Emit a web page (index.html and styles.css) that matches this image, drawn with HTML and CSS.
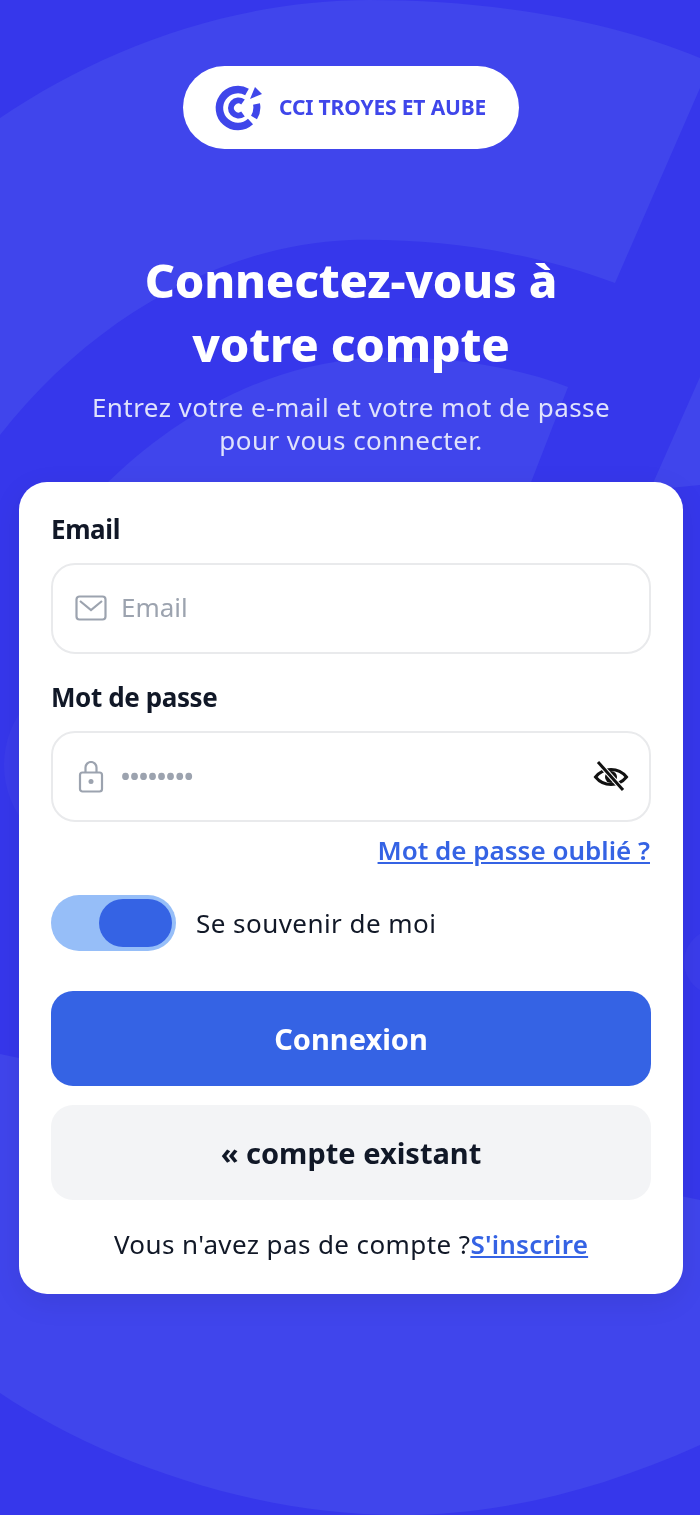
FILE: index.html
```html
<!doctype html>
<html lang="fr">
<head>
  <meta charset="UTF-8" />
  <title>Connexion - CCI Troyes et Aube</title>
  <meta name="viewport" content="width=device-width, initial-scale=1.0" />
  <link rel="stylesheet" href="styles.css">
</head>
<body>
  <!-- Background watermark -->
  <svg class="bg-shapes" viewBox="0 0 700 1515" aria-hidden="true">
    <path d="M0 118C100 50 230 0 370 0C490 0 610 20 700 58V88L615 283C540 255 450 238 350 240C220 245 90 320 0 435Z" />
    <path d="M100 490C170 420 260 365 370 358C440 355 510 365 568 387L528 490Z" />
    <path d="M650 490L700 377V485Z" />
    <path d="M0 1054L700 1200V1445C600 1490 500 1515 400 1515C250 1515 100 1460 0 1393Z" />
    <ellipse class="faint" cx="90" cy="765" rx="86" ry="90" />
    <ellipse class="faint" cx="720" cy="962" rx="36" ry="34" />
  </svg>

  <div id="app">
    <div class="logo">
      <svg class="logo-mark" viewBox="0 0 48 48" aria-hidden="true">
        <path class="ring" d="M33 7.9A18.5 18.5 0 1 0 36.5 37.6" />
        <path class="ring-small" d="M29 18A7.5 7.5 0 1 0 29 30" />
        <path class="ring-i" d="M42.5 20A18.5 18.5 0 0 1 40 33.5" />
        <path class="dot-i" d="M41 3L48 10L36 15Z" />
      </svg>
      <span class="logo-text">CCI TROYES ET AUBE</span>
    </div>

    <h1>Connectez-vous à<br>votre compte</h1>
    <p class="subtitle">Entrez votre e-mail et votre mot de passe<br>pour vous connecter.</p>

    <div class="card">
      <div class="field-label">Email</div>
      <div class="input-box">
        <svg class="input-icon" viewBox="0 0 32 32" aria-hidden="true">
          <rect x="1.5" y="3.5" width="29" height="23" rx="3" />
          <path d="M5 8L16 17L27 8" />
        </svg>
        <span class="placeholder">Email</span>
      </div>

      <div class="field-label second">Mot de passe</div>
      <div class="input-box">
        <svg class="input-icon" viewBox="0 0 32 32" aria-hidden="true">
          <rect x="5" y="11.5" width="22" height="19" rx="2.5" />
          <path d="M10.5 11.5V6.5a5.5 5.5 0 0 1 11 0V11.5" />
          <circle class="lock-dot" cx="16" cy="20.5" r="2.5" />
        </svg>
        <span class="dots">••••••••</span>
        <svg class="eye-icon" viewBox="0 0 36 36" aria-hidden="true">
          <path d="M2.5 18C7 12.5 12 10.5 18 10.5S29 12.5 33.5 18C29 23.5 24 25.5 18 25.5S7 23.5 2.5 18Z" />
          <circle class="pupil" cx="18" cy="18" r="6" />
          <path class="slash-gap" d="M5 3L30 31" />
          <path class="slash" d="M5 3L30 31" />
        </svg>
      </div>
      <div class="forgot"><a href="#">Mot de passe oublié ?</a></div>

      <div class="remember">
        <div class="toggle"><div class="toggle-thumb"></div></div>
        <span>Se souvenir de moi</span>
      </div>

      <button class="btn btn-primary">Connexion</button>
      <button class="btn btn-light">« compte existant</button>

      <p class="signup">Vous n'avez pas de compte ?<a href="#">S'inscrire</a></p>
    </div>
  </div>
</body>
</html>
```

FILE: styles.css
```css
body, html {
  margin: 0;
  padding: 0;
  height: 100%;
  overflow: hidden;
  background: #3637eb;
  font-family: 'Noto Sans', sans-serif;
}
/* Watermark behind everything */
.bg-shapes {
  position: fixed;
  top: 0;
  left: 0;
  width: 700px;
  height: 1515px;
  fill: #4045ec;
}
.bg-shapes .faint {
  fill: #3b3ceb;
}
#app {
  position: relative;
  display: flex;
  flex-direction: column;
  align-items: center;
  padding: 66px 0 0 2px;
}
/* Logo pill */
.logo {
  width: 336px;
  height: 83px;
  box-sizing: border-box;
  padding-left: 31px;
  background: white;
  border-radius: 42px;
  display: flex;
  align-items: center;
  gap: 17px;
}
.logo-mark {
  width: 48px;
  height: 48px;
  flex: none;
}
.logo-mark path {
  fill: none;
  stroke: #3f46ea;
}
.logo-mark .ring {
  stroke-width: 7.5;
}
.logo-mark .ring-small {
  stroke-width: 6;
}
.logo-mark .ring-i {
  stroke-width: 7;
}
.logo-mark .dot-i {
  fill: #3f46ea;
  stroke: none;
}
.logo-text {
  color: #3f46ea;
  font-size: 21px;
  font-weight: 700;
  letter-spacing: -0.15px;
  white-space: nowrap;
  padding-bottom: 2px;
}
h1 {
  margin: 99px 0 0;
  color: white;
  font-size: 47px;
  font-weight: 800;
  line-height: 64px;
  letter-spacing: -0.2px;
  text-align: center;
}
.subtitle {
  margin: 15px 0 0;
  color: #dfe2fc;
  font-size: 26px;
  line-height: 33px;
  text-align: center;
  letter-spacing: 0.44px;
}
/* Form card */
.card {
  width: 664px;
  height: 812px;
  box-sizing: border-box;
  margin-top: 25px;
  padding: 29px 32px;
  background: white;
  border-radius: 28px;
  box-shadow: 0 8px 30px rgba(0, 0, 0, 0.08);
}
.field-label {
  color: #111827;
  font-size: 26px;
  font-weight: 700;
  line-height: 36px;
  letter-spacing: -0.4px;
}
.field-label.second {
  margin-top: 25px;
}
.input-box {
  height: 91px;
  box-sizing: border-box;
  margin-top: 16px;
  padding: 0 20px 0 22px;
  border: 2px solid #e9eaec;
  border-radius: 24px;
  display: flex;
  align-items: center;
  gap: 14px;
}
.input-icon {
  width: 32px;
  height: 32px;
  flex: none;
  fill: none;
  stroke: #9ca3af;
  stroke-width: 2.2;
}
.input-icon .lock-dot {
  fill: #9ca3af;
  stroke: none;
}
.placeholder {
  color: #9ca3af;
  font-size: 26px;
  padding-bottom: 4px;
}
.dots {
  color: #9ca3af;
  font-size: 24px;
  font-weight: 700;
  padding-bottom: 2px;
}
.eye-icon {
  width: 36px;
  height: 36px;
  margin-left: auto;
  fill: none;
  stroke: #111;
  stroke-width: 3;
}
.eye-icon .pupil {
  fill: #111;
  stroke: none;
}
.eye-icon .slash-gap {
  stroke: white;
  stroke-width: 5;
}
.forgot {
  margin-top: 10px;
  padding-right: 1px;
  text-align: right;
}
a {
  color: #3563e4;
  font-weight: 600;
  text-decoration: underline;
}
.forgot a {
  font-size: 26px;
  line-height: 36px;
}
.remember {
  margin-top: 27px;
  display: flex;
  align-items: center;
  gap: 20px;
  color: #111827;
  font-size: 26px;
  letter-spacing: 0.45px;
}
.toggle {
  width: 125px;
  height: 56px;
  box-sizing: border-box;
  padding: 4px;
  background: #96bef8;
  border-radius: 28px;
  display: flex;
  justify-content: flex-end;
}
.toggle-thumb {
  width: 73px;
  height: 48px;
  background: #3563e4;
  border-radius: 24px;
}
.btn {
  display: block;
  width: 100%;
  height: 95px;
  padding: 0;
  border: none;
  border-radius: 22px;
  font-family: inherit;
  font-size: 29px;
  cursor: pointer;
}
.btn-primary {
  margin-top: 40px;
  background: #3563e4;
  color: white;
  font-weight: 700;
}
.btn-light {
  margin-top: 19px;
  background: #f3f4f6;
  color: #111827;
  font-weight: 700;
}
.signup {
  margin: 26px 0 0;
  color: #111827;
  font-size: 26px;
  line-height: 36px;
  text-align: center;
  letter-spacing: 0.4px;
}
.signup a {
  letter-spacing: 0.25px;
}
```
